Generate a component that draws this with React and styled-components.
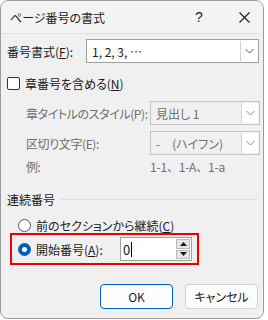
import React from "react";
import styled, { createGlobalStyle } from "styled-components";

const GlobalStyle = createGlobalStyle`
  html, body {
    margin: 0;
    padding: 0;
    background: #ffffff;
  }
  body {
    font-family: "Noto Sans CJK JP", "Noto Sans", sans-serif;
    font-size: 12px;
    color: #1a1a1a;
    font-feature-settings: "palt";
  }
`;

const Dialog = styled.div`
  width: 262px;
  height: 317px;
  border: 1px solid #9a9a9a;
  border-radius: 8px;
  background: #f0f0f0;
  overflow: hidden;
  display: flex;
  flex-direction: column;
`;

const TitleBar = styled.div`
  height: 32px;
  display: flex;
  align-items: center;
  background: #f3f3f3;
  border-bottom: 1px solid #e2e2e2;
  padding-left: 9px;
`;

const Title = styled.div`
  flex: 1;
  font-size: 12px;
  color: #1a1a1a;
`;

const TitleButton = styled.div`
  width: ${(p) => p.$w}px;
  margin-right: ${(p) => p.$right || 0}px;
  display: flex;
  justify-content: center;
  align-items: center;
  font-family: "Liberation Sans", sans-serif;
  font-size: 14px;
  color: #1a1a1a;
`;

const Body = styled.div`
  flex: 1;
  display: flex;
  flex-direction: column;
  padding: 4px 3px 0 6px;
`;

const FieldRow = styled.div`
  display: flex;
  align-items: center;
  height: 24px;
  margin-top: ${(p) => p.$top || 0}px;
  padding-left: ${(p) => p.$indent || 0}px;
`;

const Label = styled.div`
  width: ${(p) => p.$w}px;
  flex-shrink: 0;
  white-space: nowrap;
  color: ${(p) => (p.$disabled ? "#6e6e6e" : "#1a1a1a")};
  letter-spacing: ${(p) => (p.$disabled ? "-0.4px" : "0")};
`;

const Select = styled.div`
  flex: 1;
  height: 24px;
  box-sizing: border-box;
  display: flex;
  align-items: stretch;
  border: 1px solid ${(p) => (p.$disabled ? "#c4c4c4" : "#a0a0a0")};
  background: ${(p) => (p.$disabled ? "#f0f0f0" : "#ffffff")};
  margin-right: ${(p) => p.$right || 0}px;
`;

const SelectValue = styled.div`
  flex: 1;
  display: flex;
  align-items: center;
  padding-left: 5px;
  color: ${(p) => (p.$disabled ? "#6e6e6e" : "#1a1a1a")};
  white-space: nowrap;
`;

const DropButton = styled.div`
  width: 16px;
  display: flex;
  align-items: center;
  justify-content: center;
  background: #ffffff;
  border-left: 1px solid ${(p) => (p.$disabled ? "#d4d4d4" : "#d0d0d0")};
  margin: 1px;
`;

const CheckRow = styled.label`
  display: flex;
  align-items: center;
  gap: 5px;
  height: 16px;
  margin-top: ${(p) => p.$top || 0}px;
  padding-left: ${(p) => p.$indent || 0}px;
`;

const CheckBox = styled.span`
  width: 11px;
  height: 11px;
  border: 1px solid #333333;
  border-radius: 2px;
  background: #ffffff;
  flex-shrink: 0;
`;

const Radio = styled.span`
  width: ${(p) => (p.$on ? 5 : 11)}px;
  height: ${(p) => (p.$on ? 5 : 11)}px;
  border-radius: 50%;
  flex-shrink: 0;
  border: ${(p) => (p.$on ? "4px solid #005fb8" : "1px solid #555555")};
  background: #ffffff;
`;

const ExampleRow = styled.div`
  display: flex;
  height: 16px;
  align-items: center;
  margin-top: 3px;
  padding-left: 19px;
  color: #6e6e6e;
`;

const ExampleText = styled.span`
  font-feature-settings: normal;
  letter-spacing: -0.2px;
`;

const GroupHeader = styled.div`
  display: flex;
  align-items: center;
  gap: 6px;
  margin-top: 17px;
  height: 16px;
  padding-right: 2px;
`;

const GroupLine = styled.div`
  flex: 1;
  height: 1px;
  background: #dcdcdc;
`;

const Highlight = styled.div`
  margin: 0 0 0 3px;
  width: 179px;
  height: 28px;
  border: 2px solid #ee0000;
  display: flex;
  align-items: center;
  padding-left: 6px;
  gap: 5px;
`;

const SpinBox = styled.div`
  margin-left: auto;
  margin-right: 5px;
  width: 70px;
  height: 22px;
  border: 1px solid #a0a0a0;
  background: #ffffff;
  display: flex;
`;

const SpinText = styled.div`
  flex: 1;
  display: flex;
  align-items: center;
  padding-left: 2px;
  font-size: 13px;
`;

const Caret = styled.span`
  width: 1px;
  height: 15px;
  background: #000;
  margin-left: 1px;
`;

const SpinButtons = styled.div`
  width: 14px;
  display: flex;
  flex-direction: column;
  gap: 1px;
  padding: 1px;
`;

const SpinButton = styled.div`
  flex: 1;
  background: #e6e6e6;
  border: 1px solid #b8b8b8;
  display: flex;
  align-items: center;
  justify-content: center;
`;

const Footer = styled.div`
  display: flex;
  justify-content: flex-end;
  gap: 12px;
  margin-top: 19px;
  padding-right: 2px;
`;

const Button = styled.div`
  width: 73px;
  height: 25px;
  box-sizing: border-box;
  border-radius: 4px;
  border: 1px solid ${(p) => (p.$primary ? "#005fb8" : "#d0d0d0")};
  background: #fdfdfd;
  display: flex;
  align-items: center;
  justify-content: center;
  font-size: 12px;
`;

const Chevron = ({ color = "#5a5a5a" }) => (
  <svg width="9" height="6" viewBox="0 0 9 6">
    <polyline points="0.5,1 4.5,5 8.5,1" fill="none" stroke={color} strokeWidth="1" />
  </svg>
);

const Arrow = ({ up }) => (
  <svg width="7" height="4" viewBox="0 0 7 4">
    <polygon points={up ? "0,4 7,4 3.5,0" : "0,0 7,0 3.5,4"} fill="#1a1a1a" />
  </svg>
);

export default function App() {
  return (
    <>
      <GlobalStyle />
      <Dialog>
        <TitleBar>
          <Title>ページ番号の書式</Title>
          <TitleButton $w={20} $right={16}>?</TitleButton>
          <TitleButton $w={38}>
            <svg width="11" height="11" viewBox="0 0 11 11">
              <path d="M0.5 0.5 L10.5 10.5 M10.5 0.5 L0.5 10.5" stroke="#1a1a1a" strokeWidth="1.1" />
            </svg>
          </TitleButton>
        </TitleBar>
        <Body>
          <FieldRow $top={1}>
            <Label $w={79}>
              番号書式(<u>F</u>):
            </Label>
            <Select $right={1}>
              <SelectValue>1, 2, 3, …</SelectValue>
              <DropButton>
                <Chevron />
              </DropButton>
            </Select>
          </FieldRow>

          <CheckRow $top={12}>
            <CheckBox />
            <span>
              章番号を含める(<u>N</u>)
            </span>
          </CheckRow>

          <FieldRow $top={10} $indent={19}>
            <Label $w={124} $disabled>
              章タイトルのスタイル(P):
            </Label>
            <Select $disabled>
              <SelectValue $disabled>見出し 1</SelectValue>
              <DropButton $disabled>
                <Chevron color="#8a8a8a" />
              </DropButton>
            </Select>
          </FieldRow>

          <FieldRow $top={6} $indent={19}>
            <Label $w={124} $disabled>
              区切り文字(E):
            </Label>
            <Select $disabled>
              <SelectValue $disabled>-　(ハイフン)</SelectValue>
              <DropButton $disabled>
                <Chevron color="#8a8a8a" />
              </DropButton>
            </Select>
          </FieldRow>

          <ExampleRow>
            <Label $w={124} $disabled>
              例:
            </Label>
            <ExampleText>1-1、1-A、1-a</ExampleText>
          </ExampleRow>

          <GroupHeader>
            <span>連続番号</span>
            <GroupLine />
          </GroupHeader>

          <CheckRow $top={10} $indent={11}>
            <Radio />
            <span>
              前のセクションから継続(<u>C</u>)
            </span>
          </CheckRow>

          <Highlight>
            <Radio $on />
            <span>
              開始番号(<u>A</u>):
            </span>
            <SpinBox>
              <SpinText>
                0<Caret />
              </SpinText>
              <SpinButtons>
                <SpinButton>
                  <Arrow up />
                </SpinButton>
                <SpinButton>
                  <Arrow />
                </SpinButton>
              </SpinButtons>
            </SpinBox>
          </Highlight>

          <Footer>
            <Button $primary>OK</Button>
            <Button>キャンセル</Button>
          </Footer>
        </Body>
      </Dialog>
    </>
  );
}
